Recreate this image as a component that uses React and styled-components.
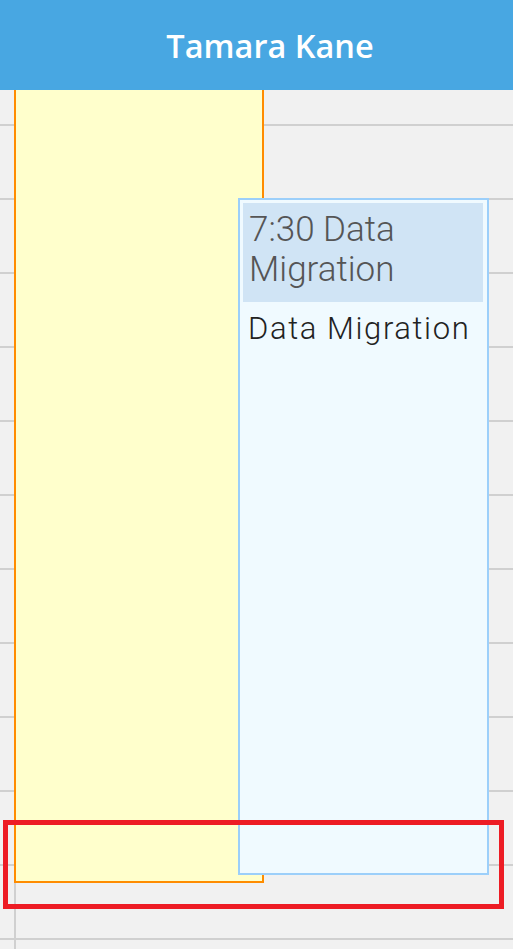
import styled, { createGlobalStyle } from "styled-components"

const GlobalStyle = createGlobalStyle`
    html, body {
        margin: 0;
        padding: 0;
        background: #f1f1f1;
    }

    body {
        font-family: Roboto, "Liberation Sans", sans-serif;
        overflow: hidden;
    }
`

const StyledScheduler = styled.div`
    position: relative;
    width: 513px;
    height: 949px;
    overflow: hidden;
    background-color: #f1f1f1;
`

const ResourceHeader = styled.div`
    position: relative;
    z-index: 3;

    height: 90px;
    background-color: #48a7e2;

    display: flex;
    align-items: center;
    justify-content: center;

    padding-left: 27px;

    h1 {
        margin: 0;
        color: white;
        font-family: "Open Sans", "Liberation Sans", sans-serif;
        font-size: 32.5px;
        font-weight: 600;
    }
`

const Grid = styled.div`
    position: relative;

    display: grid;
    grid-template-columns: 14px 1fr;
`

const Column = styled.div`
    display: flex;
    flex-direction: column;

    border-left: ${(p) => (p.$divider ? "2px solid #d0d0d0" : "none")};
`

const Slot = styled.div`
    flex: none;
    box-sizing: border-box;
    height: ${(p) => (p.$first ? "36px" : "74px")};
    border-bottom: 2px solid #d0d0d0;
`

const Event = styled.div`
    position: absolute;
    box-sizing: border-box;

    background-color: ${(p) => p.$fill};
    border: 2px solid ${(p) => p.$border};

    padding: 3px 4px 3px 3px;
`

const EventTitle = styled.div`
    background-color: #d0e4f5;
    color: #555;

    font-size: 35px;
    font-weight: 300;
    line-height: 40px;

    padding: 7px 6px 12px 6px;
`

const EventBody = styled.div`
    color: #222;

    font-size: 31px;
    font-weight: 300;
    letter-spacing: 1.6px;
    line-height: 36px;

    padding: 9px 4px 0 5px;
`

const Highlight = styled.div`
    position: absolute;
    z-index: 4;
    left: 3px;
    top: 820px;

    width: 501px;
    height: 89px;
    box-sizing: border-box;

    border: 5px solid #ed1c24;
`

const slots = Array.from({ length: 13 })

export default function App() {
    return (
        <>
            <GlobalStyle />
            <StyledScheduler>
                <ResourceHeader>
                    <h1>Tamara Kane</h1>
                </ResourceHeader>
                <Grid>
                    <Column>
                        {slots.map((_, i) => (
                            <Slot key={i} $first={i === 0} />
                        ))}
                    </Column>
                    <Column $divider>
                        {slots.map((_, i) => (
                            <Slot key={i} $first={i === 0} />
                        ))}
                    </Column>
                </Grid>

                <Event
                    $fill="#ffffcc"
                    $border="#ff8c00"
                    style={{ left: 14, top: 40, width: 250, height: 843, zIndex: 1 }}
                />
                <Event
                    $fill="#f0faff"
                    $border="#9ccffa"
                    style={{ left: 238, top: 198, width: 251, height: 677, zIndex: 2 }}
                >
                    <EventTitle>7:30 Data Migration</EventTitle>
                    <EventBody>Data Migration</EventBody>
                </Event>

                <Highlight />
            </StyledScheduler>
        </>
    )
}
